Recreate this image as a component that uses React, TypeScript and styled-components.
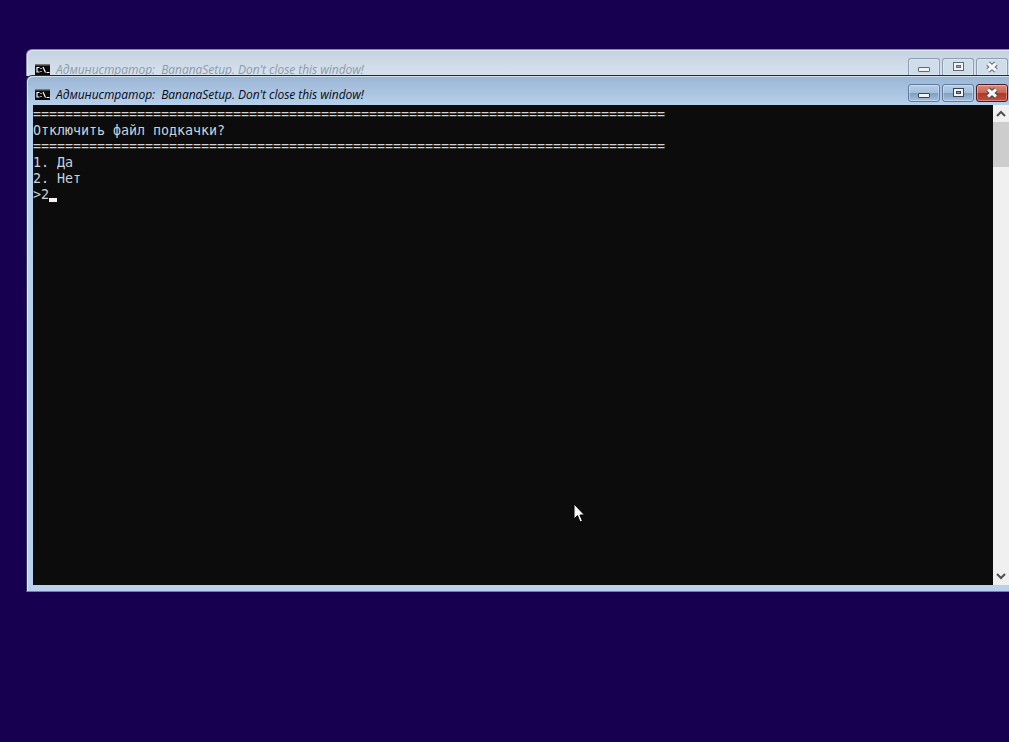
import React from "react";
import styled, { createGlobalStyle } from "styled-components";

const Global = createGlobalStyle`
  html, body { margin: 0; padding: 0; height: 100%; overflow: hidden; background: #170050; }
`;
const Desktop = styled.div`
  position: relative; width: 1009px; height: 742px; overflow: hidden; background: #170050;
`;
const BackWindow = styled.section`
  position: absolute; left: 26px; top: 49px; width: 1000px; height: 27px; box-sizing: border-box;
  border-radius: 6px 6px 0 0; border-top: 1px solid #7f8b9c; border-left: 1px solid #8a95a5;
  background: linear-gradient(#c4d2e1, #d6e2ee);
  box-shadow: inset 1px 1px 0 rgba(255,255,255,0.45);
`;
const FrontWindow = styled.section`
  position: absolute; left: 26px; top: 75px; width: 1000px; height: 517px; box-sizing: border-box;
  display: flex; flex-direction: column;
  border-radius: 6px 6px 0 0; border-top: 1px solid #1f2a3c; border-left: 1px solid #2a3a50;
  border-bottom: 1px solid #1fa7b5;
  background: linear-gradient(#9ab5d4 0, #b6cfea 29px, #b9d1ec 100%);
  box-shadow: inset 1px 1px 0 rgba(255,255,255,0.55);
`;
const TitleBar = styled.header<{ $back?: boolean }>`
  height: ${(p) => (p.$back ? 26 : 29)}px; flex: none; display: flex; align-items: center;
  padding: ${(p) => (p.$back ? "12px" : "8px")} 0 0 8px;
  box-sizing: border-box;
  font: italic 12px "Open Sans", "Noto Sans", sans-serif;
  letter-spacing: -0.04px;
  color: ${(p) => (p.$back ? "#8f9aa6" : "#060a18")};
  white-space: pre;
`;
const AppIcon = styled.svg`
  width: 15px; height: 11px; margin: 0 6px 0 0; flex: none;
`;
const Controls = styled.div<{ $top: number }>`
  position: absolute; left: 908px; top: ${(p) => p.$top}px; display: flex; gap: 2px;
`;
const WinButton = styled.div<{ $kind: string; $back?: boolean }>`
  box-sizing: border-box; width: 32px; height: ${(p) => (p.$back ? 17 : 18)}px;
  border: 1px solid ${(p) => (p.$kind === "close" && !p.$back ? "#4d1a22" : p.$back ? "#8f9db0" : "#5f7a9b")};
  ${(p) => (p.$back ? "border-bottom: none;" : "")}
  border-radius: 3px 3px ${(p) => (p.$back ? "0 0" : "3px 3px")};
  display: flex; align-items: center; justify-content: center;
  background: ${(p) =>
    p.$back
      ? "#cfdcea"
      : p.$kind === "close"
        ? "linear-gradient(#d98c7c 0, #cb6552 48%, #b03826 52%, #bd4f3f 100%)"
        : "linear-gradient(#b6cde6 0, #a4bfdc 48%, #7f9fc2 52%, #a3c0df 100%)"};
  box-shadow: inset 0 0 0 1px rgba(255,255,255,${(p) => (p.$back ? 0.25 : 0.35)});
`;
const Body = styled.div`
  flex: 1; display: flex; margin: 0 0 6px 6px; min-height: 0;
`;
const Console = styled.pre`
  margin: 0; width: 960px; flex: none; background: #0c0c0c; color: #c8d2da; overflow: hidden;
  padding-top: 2px; box-sizing: border-box;
  font: 13.33px/16px "DejaVu Sans Mono", "Liberation Mono", monospace;
  letter-spacing: -0.025px;
`;
const Line = styled.div`
  height: 16px; white-space: pre; overflow: hidden;
`;
const Caret = styled.span`
  display: inline-block; width: 8px; height: 4px; background: #f2f2f2; vertical-align: -3px;
`;
const Scrollbar = styled.aside`
  width: 16px; flex: none; background: #f0f0f0; display: flex; flex-direction: column;
`;
const Arrow = styled.div`
  height: 17px; flex: none; display: flex; align-items: center; justify-content: center;
`;
const Thumb = styled.div`
  height: 45px; flex: none; background: #cdcdcd;
`;
const Track = styled.div`
  flex: 1;
`;
const Cursor = styled.svg`
  position: absolute; left: 573px; top: 503px; width: 12px; height: 21px;
`;

const Icon = () => (
  <AppIcon viewBox="0 0 15 11">
    <rect width="15" height="11" fill="#0b0b0b" />
    <rect x="0" y="0" width="15" height="1.5" fill="#777" />
    <path d="M4.5 3.5H2v4.5h2.5M6 4v1M6 7v1M8 3l2.5 5.5M11.5 8.5h3" stroke="#fafafa" strokeWidth="1.2" fill="none" />
  </AppIcon>
);
const Glyph = ({ kind, faded }: { kind: string; faded?: boolean }) => {
  const stroke = faded ? "#5f6a78" : "#3a4352";
  if (kind === "min")
    return <svg width="12" height="16" viewBox="0 0 12 16"><rect x="0.5" y="8.5" width="11" height="4" rx="0.5" fill="#f2f2f2" stroke={stroke} /></svg>;
  if (kind === "max")
    return <svg width="11" height="10" viewBox="0 0 11 10"><rect x="0.5" y="0.5" width="10" height="8" fill="#f2f2f2" stroke={stroke} /><rect x="3.5" y="3.5" width="4" height="2" fill="#8fa6bf" stroke={stroke} /></svg>;
  return <svg width="14" height="12" viewBox="0 0 14 12"><path d="M3 2.5l8 7M11 2.5l-8 7" stroke={stroke} strokeWidth="5" fill="none" /><path d="M3 2.5l8 7M11 2.5l-8 7" stroke="#f6f6f6" strokeWidth="3" fill="none" /></svg>;
};
const title = "Администратор:  BananaSetup. Don't close this window!";
const rule = "=".repeat(79);

export default function App() {
  return (
    <Desktop>
      <Global />
      <BackWindow>
        <TitleBar $back><Icon />{title}</TitleBar>
      </BackWindow>
      <Controls $top={58}>
        <WinButton $kind="min" $back><Glyph kind="min" faded /></WinButton>
        <WinButton $kind="max" $back><Glyph kind="max" faded /></WinButton>
        <WinButton $kind="close" $back><Glyph kind="close" faded /></WinButton>
      </Controls>
      <FrontWindow>
        <TitleBar><Icon />{title}</TitleBar>
        <Body>
          <Console>
            <Line>{rule}</Line>
            <Line>Отключить файл подкачки?</Line>
            <Line>{rule}</Line>
            <Line>1. Да</Line>
            <Line>2. Нет</Line>
            <Line>&gt;2<Caret /></Line>
          </Console>
          <Scrollbar>
            <Arrow><svg width="10" height="7" viewBox="0 0 10 7"><path d="M1 6l4-4 4 4" stroke="#505050" strokeWidth="2" fill="none" /></svg></Arrow>
            <Thumb />
            <Track />
            <Arrow><svg width="10" height="7" viewBox="0 0 10 7"><path d="M1 1l4 4 4-4" stroke="#505050" strokeWidth="2" fill="none" /></svg></Arrow>
          </Scrollbar>
        </Body>
      </FrontWindow>
      <Controls $top={84}>
        <WinButton $kind="min"><Glyph kind="min" /></WinButton>
        <WinButton $kind="max"><Glyph kind="max" /></WinButton>
        <WinButton $kind="close"><Glyph kind="close" /></WinButton>
      </Controls>
      <Cursor viewBox="0 0 12 21">
        <path d="M1 1v15l3.5-3.5L7 19l2.5-1-2.6-6H11.5z" fill="#fff" stroke="#000" strokeWidth="1" />
      </Cursor>
    </Desktop>
  );
}
